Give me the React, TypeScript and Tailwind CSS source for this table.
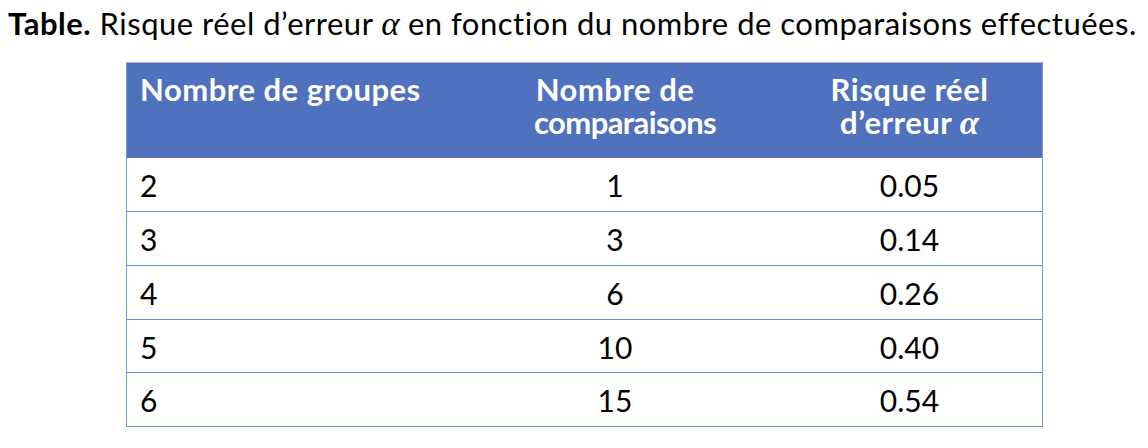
import React from "react";

const rows = [
  { g: "2", c: "1", r: "0.05", h: "h-[54px]" },
  { g: "3", c: "3", r: "0.14", h: "h-[54px]" },
  { g: "4", c: "6", r: "0.26", h: "h-[54px]" },
  { g: "5", c: "10", r: "0.40", h: "h-[53px]" },
  { g: "6", c: "15", r: "0.54", h: "h-[54px]" },
];

function Alpha() {
  return (
    <span className="italic [font-family:'Liberation_Serif',serif] text-[1.12em] leading-none tracking-normal">α</span>
  );
}

export default function App() {
  return (
    <div className="w-[1148px] h-[448px] bg-white overflow-hidden [font-family:Lato,'Open_Sans',sans-serif] text-black">
      <div className="pl-[8px] pt-[5px] h-[62px] whitespace-nowrap text-[31px] leading-[36px] tracking-[0.5px]">
        <span className="font-bold">Table.</span> Risque réel d’erreur <Alpha /> en fonction du nombre de comparaisons effectuées.
      </div>
      <div className="ml-[126px] w-[917px] border-x border-[#7a98da]">
        <div className="h-[96px] border-t border-[#9fb3e0] bg-[#4f71be] text-white font-bold text-[31px] leading-[32.5px] tracking-[0.5px] pt-[10px] grid grid-cols-[407px_162px_346px]">
          <div className="pl-[13px] whitespace-nowrap">Nombre de groupes</div>
          <div className="text-center">
            Nombre de <span className="tracking-[-0.6px]">comparaisons</span>
          </div>
          <div className="pl-[81px] text-center">
            Risque réel
            <br />
            d’erreur <Alpha />
          </div>
        </div>
        {rows.map((row) => (
          <div
            key={row.g}
            className={`${row.h} border-b border-[#6f8fd6] text-[30px] leading-[33px] pt-[11px] grid grid-cols-[407px_162px_346px]`}
          >
            <div className="pl-[13px]">{row.g}</div>
            <div className="text-center">{row.c}</div>
            <div className="pl-[81px] text-center">{row.r}</div>
          </div>
        ))}
      </div>
    </div>
  );
}
